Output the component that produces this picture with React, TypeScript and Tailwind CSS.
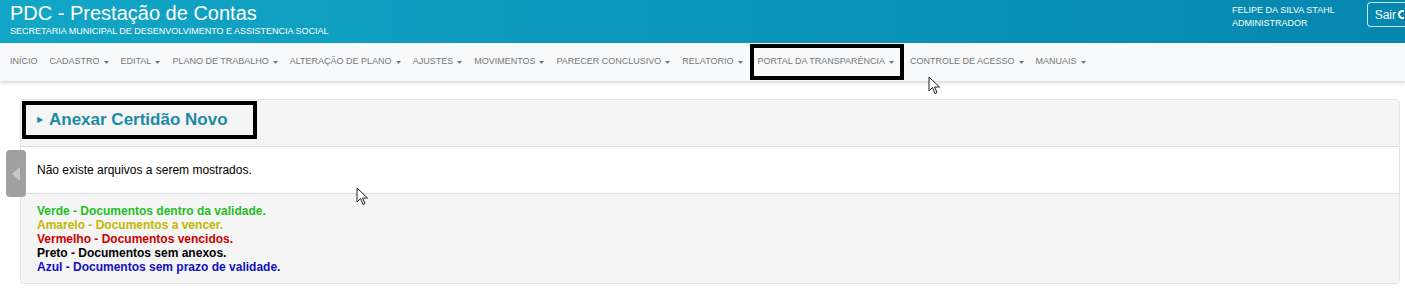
import React from 'react';

const menu = [
  { label: 'INÍCIO', caret: false },
  { label: 'CADASTRO', caret: true },
  { label: 'EDITAL', caret: true },
  { label: 'PLANO DE TRABALHO', caret: true },
  { label: 'ALTERAÇÃO DE PLANO', caret: true },
  { label: 'AJUSTES', caret: true },
  { label: 'MOVIMENTOS', caret: true },
  { label: 'PARECER CONCLUSIVO', caret: true },
  { label: 'RELATORIO', caret: true },
  { label: 'PORTAL DA TRANSPARÊNCIA', caret: true, boxed: true },
  { label: 'CONTROLE DE ACESSO', caret: true },
  { label: 'MANUAIS', caret: true },
];

const legend = [
  { text: 'Verde - Documentos dentro da validade.', color: 'text-[#1fbf1f]' },
  { text: 'Amarelo - Documentos a vencer.', color: 'text-[#c4b800]' },
  { text: 'Vermelho - Documentos vencidos.', color: 'text-[#cc0000]' },
  { text: 'Preto - Documentos sem anexos.', color: 'text-black' },
  { text: 'Azul - Documentos sem prazo de validade.', color: 'text-[#1010c0]' },
];

const Cursor: React.FC<{ className: string }> = ({ className }) => (
  <svg className={className} width="13" height="19" viewBox="0 0 13 19">
    <path d="M1 1 L1 15 L4.5 11.5 L7 17.5 L9 16.6 L6.6 11 L11.5 11 Z" fill="#fff" stroke="#222" strokeWidth="1" strokeLinejoin="round" />
  </svg>
);

const Caret = () => (
  <svg className="ml-[4px]" width="5" height="3" viewBox="0 0 5 3"><path d="M0 0 H5 L2.5 3 Z" fill="#777" /></svg>
);

const App: React.FC = () => {
  return (
    <div className="relative w-[1405px] h-[294px] overflow-hidden bg-white font-['Liberation_Sans',Arial,sans-serif]">
      {/* Header */}
      <header className="flex h-[43px] justify-between bg-gradient-to-r from-[#12a6c6] to-[#0587b0] text-white">
        <div className="pl-[10px] pt-[2px]">
          <div className="text-[20px] leading-[22px]">PDC - Prestação de Contas</div>
          <div className="text-[9px] leading-[14px]">SECRETARIA MUNICIPAL DE DESENVOLVIMENTO E ASSISTENCIA SOCIAL</div>
        </div>
        <div className="flex items-start gap-[32px]">
          <div className="pt-[4px] text-[9px] leading-[13px]">
            <div>FELIPE DA SILVA STAHL</div>
            <div>ADMINISTRADOR</div>
          </div>
          <button className="mt-[2px] flex h-[25px] items-center gap-[2px] rounded-l-[4px] border border-r-0 border-white/80 pl-[7px] pr-[1px] text-[12px]">
            Sair
            <span className="inline-block h-[9px] w-[6px] rounded-l-full border-2 border-r-0 border-white" />
          </button>
        </div>
      </header>

      {/* Nav */}
      <nav className="flex h-[38px] items-center bg-[#f8f9fa] pl-[10px] text-[9px] text-[#777] shadow-[0_2px_3px_rgba(0,0,0,0.15)]">
        {menu.map((m) =>
          m.boxed ? (
            <div key={m.label} className="ml-[-5px] mr-[6px] flex h-[36px] items-center border-[4px] border-black pl-[4px] pr-[6px]">
              {m.label}
              <Caret />
            </div>
          ) : (
            <div key={m.label} className="mr-[12px] flex items-center">
              {m.label}
              {m.caret && <Caret />}
            </div>
          )
        )}
      </nav>

      {/* Panel */}
      <div className="relative ml-[20px] mr-[5px] mt-[18px] rounded-[4px] border border-[#e3e3e3]">
        <div className="h-[47px] rounded-t-[4px] border-b border-[#ddd] bg-[#f5f5f5] pl-[1px] pt-[1px]">
          <div className="flex h-[38px] w-[235px] items-center border-[4px] border-black pl-[11px]">
            <span className="mr-[6px] text-[8px] text-[#1a8aa8]">▶</span>
            <span className="text-[17px] font-bold text-[#1a8aa8]">Anexar Certidão Novo</span>
          </div>
        </div>
        <div className="flex h-[47px] items-center border-b border-[#ddd] bg-white pl-[16px] text-[12px] text-black">
          Não existe arquivos a serem mostrados.
        </div>
        <div className="rounded-b-[4px] bg-[#f5f5f5] pb-[9px] pl-[16px] pt-[10px] text-[12px] font-bold leading-[14px]">
          {legend.map((l) => (
            <div key={l.text} className={l.color}>{l.text}</div>
          ))}
        </div>
      </div>

      {/* Side toggle tab */}
      <div className="absolute left-[6px] top-[150px] flex h-[47px] w-[20px] items-center justify-center rounded-[4px] bg-[#a0a0a0]">
        <svg width="10" height="14" viewBox="0 0 10 14"><path d="M9 0 L9 14 L1 7 Z" fill="#c8c8c8" /></svg>
      </div>

      <Cursor className="absolute left-[928px] top-[76px]" />
      <Cursor className="absolute left-[356px] top-[187px]" />
    </div>
  );
};

export default App;
